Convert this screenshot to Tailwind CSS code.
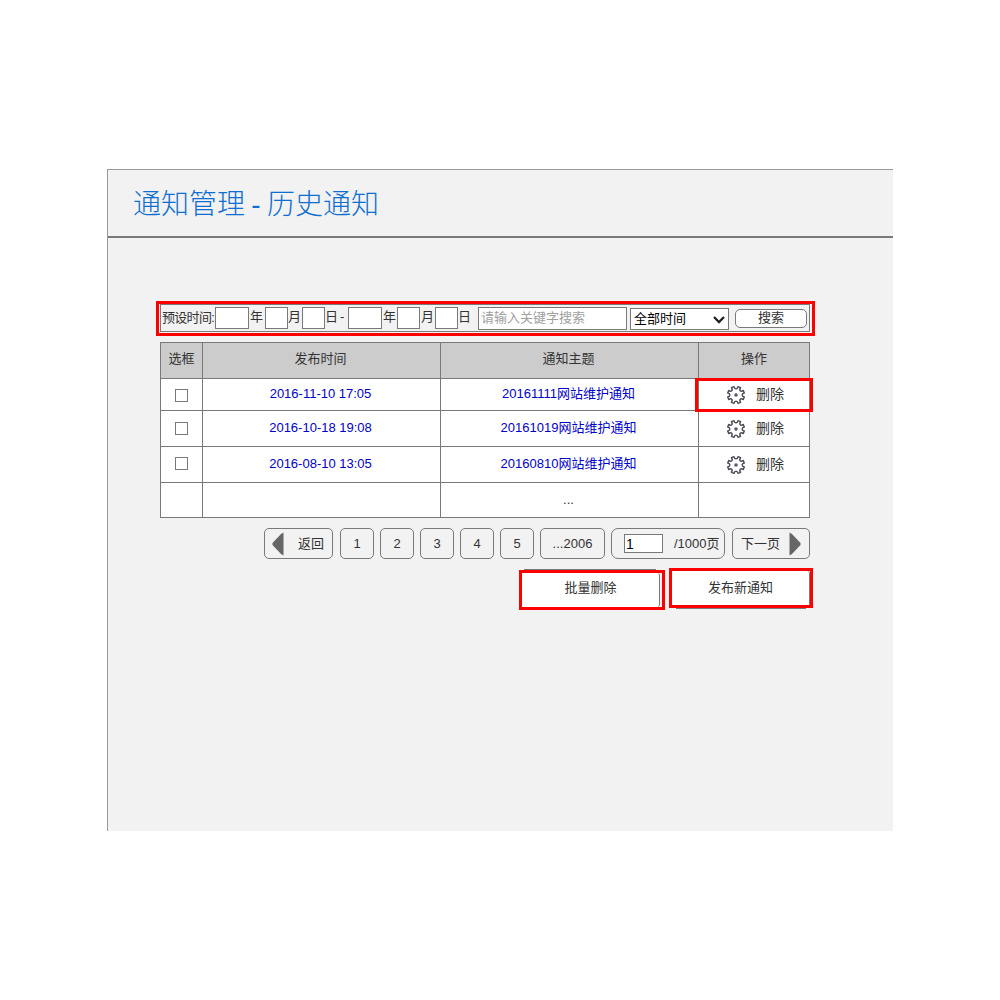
<!DOCTYPE html>
<html lang="zh-CN">
<head>
<meta charset="utf-8">
<title>通知管理 - 历史通知</title>
<script src="https://cdn.jsdelivr.net/npm/@tailwindcss/browser@4"></script>
</head>
<body class="bg-white h-[1000px] overflow-hidden pl-[107px] pt-[169px] text-[13px] leading-[16px] text-[#333] font-['Liberation_Sans','Noto_Sans_CJK_SC',sans-serif]">
<svg class="hidden">
  <symbol id="gear" viewBox="-10 -10 20 20">
    <path d="M-2 -8.3Q-1.6 -6.1 0 -6.1Q1.6 -6.1 2 -8.3L4.6 -7.3Q3.1 -5.4 4.3 -4.3Q5.4 -3.1 7.3 -4.6L8.3 -2Q6.1 -1.6 6.1 0Q6.1 1.6 8.3 2L7.3 4.6Q5.4 3.1 4.3 4.3Q3.1 5.4 4.6 7.3L2 8.3Q1.6 6.1 0 6.1Q-1.6 6.1 -2 8.3L-4.6 7.3Q-3.1 5.4 -4.3 4.3Q-5.4 3.1 -7.3 4.6L-8.3 2Q-6.1 1.6 -6.1 0Q-6.1 -1.6 -8.3 -2L-7.3 -4.6Q-5.4 -3.1 -4.3 -4.3Q-3.1 -5.4 -4.6 -7.3Z" fill="none" stroke="#4b4b57" stroke-width="1.4" stroke-linejoin="round"/>
    <circle r="1.8" fill="#5b5b66"/>
  </symbol>
</svg>
<main class="w-[786px] h-[662px] bg-[#f2f2f2] border-l border-t border-[#999]">
  <h1 class="h-[68px] border-b-2 border-[#797979] pl-[25px] pt-[15px] text-[28px] leading-[40px] font-light text-[#0f6fd0] whitespace-nowrap [word-spacing:-1.5px]">通知管理 - 历史通知</h1>

  <div class="ml-[48px] mt-[63px] w-[659px] h-[35px] border-3 border-[#fe0000] pl-px">
    <form class="flex w-[650px] h-[28px] border border-[#797979] whitespace-nowrap">
      <span class="w-[54px] pl-px pt-[5px] tracking-[-0.7px]">预设时间:</span>
      <span class="w-[34px] h-[22px] mt-[2px] bg-white border border-[#797979]"></span>
      <span class="w-[16px] pl-px pt-[4px]">年</span>
      <span class="w-[23px] h-[22px] mt-[2px] bg-white border border-[#797979]"></span>
      <span class="w-[14px] pt-[4px]">月</span>
      <span class="w-[23px] h-[22px] mt-[2px] bg-white border border-[#797979]"></span>
      <span class="w-[23px] pt-[4px]">日<span class="pl-[2px]">-</span></span>
      <span class="w-[34px] h-[22px] mt-[2px] bg-white border border-[#797979]"></span>
      <span class="w-[15px] pl-px pt-[4px]">年</span>
      <span class="w-[23px] h-[22px] mt-[2px] bg-white border border-[#797979]"></span>
      <span class="w-[15px] pl-px pt-[4px]">月</span>
      <span class="w-[23px] h-[22px] mt-[2px] bg-white border border-[#797979]"></span>
      <span class="w-[20px] pt-[4px]">日</span>
      <span class="w-[149px] h-[23px] mt-[2px] bg-white border border-[#797979] pl-[2px] pt-[2px] text-[#a0a0a0]">请输入关键字搜索</span>
      <span class="flex justify-between w-[99px] h-[22px] ml-[3px] mt-[3px] bg-white border border-[#797979] pl-[3px] pt-[2px] text-black">全部时间
        <svg class="w-[12px] h-[8px] mt-[5px] mr-[3px]" viewBox="0 0 12 8"><path d="M1 1L6 6L11 1" fill="none" stroke="#222" stroke-width="2.3"/></svg>
      </span>
      <span class="w-[72px] h-[19px] ml-[6px] mt-[4px] bg-white border border-[#797979] rounded-[5px] text-center">搜索</span>
    </form>
  </div>

  <div class="relative ml-[52px] mt-[6px] w-[650px] grid grid-cols-[42px_238px_258px_112px] grid-rows-[36px_32px_36px_36px_36px] text-center bg-white">
    <div class="border-l border-t border-[#797979] bg-[#ccc] pt-[8px]">选框</div>
    <div class="border-l border-t border-[#797979] bg-[#ccc] pt-[8px] pr-[2px]">发布时间</div>
    <div class="border-l border-t border-[#797979] bg-[#ccc] pt-[8px] pr-[2px]">通知主题</div>
    <div class="border-x border-t border-[#797979] bg-[#ccc] pt-[8px]">操作</div>

    <div class="border-l border-t border-[#797979] flex justify-center pt-[10px]"><span class="size-[13px] border border-[#797979]"></span></div>
    <div class="border-l border-t border-[#797979] pt-[7px] pr-[2px] text-[#0000cc]">2016-11-10 17:05</div>
    <div class="border-l border-t border-[#797979] pt-[7px] pr-[2px] text-[#0000cc]">20161111网站维护通知</div>
    <div class="border-x border-t border-[#797979] flex pl-[27px] pt-[6px]"><svg class="size-[20px]"><use href="#gear"/></svg><span class="pl-[10px] pt-px text-[14px]">删除</span></div>

    <div class="border-l border-t border-[#797979] flex justify-center pt-[11px]"><span class="size-[13px] border border-[#797979]"></span></div>
    <div class="border-l border-t border-[#797979] pt-[9px] pr-[2px] text-[#0000cc]">2016-10-18 19:08</div>
    <div class="border-l border-t border-[#797979] pt-[9px] pr-[2px] text-[#0000cc]">20161019网站维护通知</div>
    <div class="border-x border-t border-[#797979] flex pl-[27px] pt-[8px]"><svg class="size-[20px]"><use href="#gear"/></svg><span class="pl-[10px] pt-px text-[14px]">删除</span></div>

    <div class="border-l border-t border-[#797979] flex justify-center pt-[10px]"><span class="size-[13px] border border-[#797979]"></span></div>
    <div class="border-l border-t border-[#797979] pt-[9px] pr-[2px] text-[#0000cc]">2016-08-10 13:05</div>
    <div class="border-l border-t border-[#797979] pt-[9px] pr-[2px] text-[#0000cc]">20160810网站维护通知</div>
    <div class="border-x border-t border-[#797979] flex pl-[27px] pt-[8px]"><svg class="size-[20px]"><use href="#gear"/></svg><span class="pl-[10px] pt-px text-[14px]">删除</span></div>

    <div class="border-l border-y border-[#797979]"></div>
    <div class="border-l border-y border-[#797979]"></div>
    <div class="border-l border-y border-[#797979] pt-[9px] pr-[2px]">...</div>
    <div class="border border-[#797979]"></div>

    <div class="absolute left-[535px] top-[36px] w-[118px] h-[34px] border-3 border-[#fe0000]"></div>
  </div>

  <nav class="flex ml-[156px] mt-[10px] h-[31px] whitespace-nowrap text-center">
    <span class="flex w-[69px] border border-[#797979] rounded-[5px] pl-[7px] pt-[3px]">
      <svg class="w-[12px] h-[24px]" viewBox="0 0 12 24"><path d="M11.5 .5V23.5L9 22L.5 13V11L9 2Z" fill="#666"/></svg>
      <span class="pl-[14px] pt-[4px]">返回</span>
    </span>
    <span class="w-[34px] ml-[7px] border border-[#797979] rounded-[5px] pt-[7px]">1</span>
    <span class="w-[34px] ml-[6px] border border-[#797979] rounded-[5px] pt-[7px]">2</span>
    <span class="w-[34px] ml-[6px] border border-[#797979] rounded-[5px] pt-[7px]">3</span>
    <span class="w-[34px] ml-[6px] border border-[#797979] rounded-[5px] pt-[7px]">4</span>
    <span class="w-[34px] ml-[6px] border border-[#797979] rounded-[5px] pt-[7px]">5</span>
    <span class="w-[65px] ml-[6px] border border-[#797979] rounded-[5px] pt-[7px]">...2006</span>
    <span class="flex w-[114px] ml-[6px] border border-[#797979] rounded-[7px] pl-[12px] pt-[5px]">
      <span class="w-[39px] h-[19px] bg-white border border-[#797979] text-left pl-px pt-px text-[14px] text-black">1</span>
      <span class="pl-[11px] pt-[2px]">/1000页</span>
    </span>
    <span class="flex w-[78px] ml-[7px] border border-[#797979] rounded-[5px] pl-[8px] pt-[3px]">
      <span class="w-[48px] text-left pt-[4px]">下一页</span>
      <svg class="w-[12px] h-[24px]" viewBox="0 0 12 24"><path d="M.5 .5V23.5L3 22L11.5 13V11L3 2Z" fill="#666"/></svg>
    </span>
  </nav>

  <div class="flex items-start ml-[411px] mt-[9px] text-center">
    <div class="relative mt-[2px] w-[146px] h-[40px] border-3 border-[#fe0000] bg-[#f2f2f2]">
      <div class="w-[138px] h-[34px] bg-white border-r border-[#797979] rounded-r-[3px] pt-[7px]">批量删除</div>
      <div class="absolute left-[2px] -top-[4px] w-[132px] h-px bg-[#797979]"></div>
    </div>
    <div class="relative ml-[4px] w-[144px] h-[40px] border-3 border-[#fe0000]">
      <div class="w-[138px] h-[34px] bg-white border-r border-[#797979] rounded-tr-[3px] pt-[9px]">发布新通知</div>
      <div class="absolute left-[4px] -bottom-[4px] w-[130px] h-px bg-[#797979]"></div>
    </div>
  </div>
</main>
</body>
</html>
